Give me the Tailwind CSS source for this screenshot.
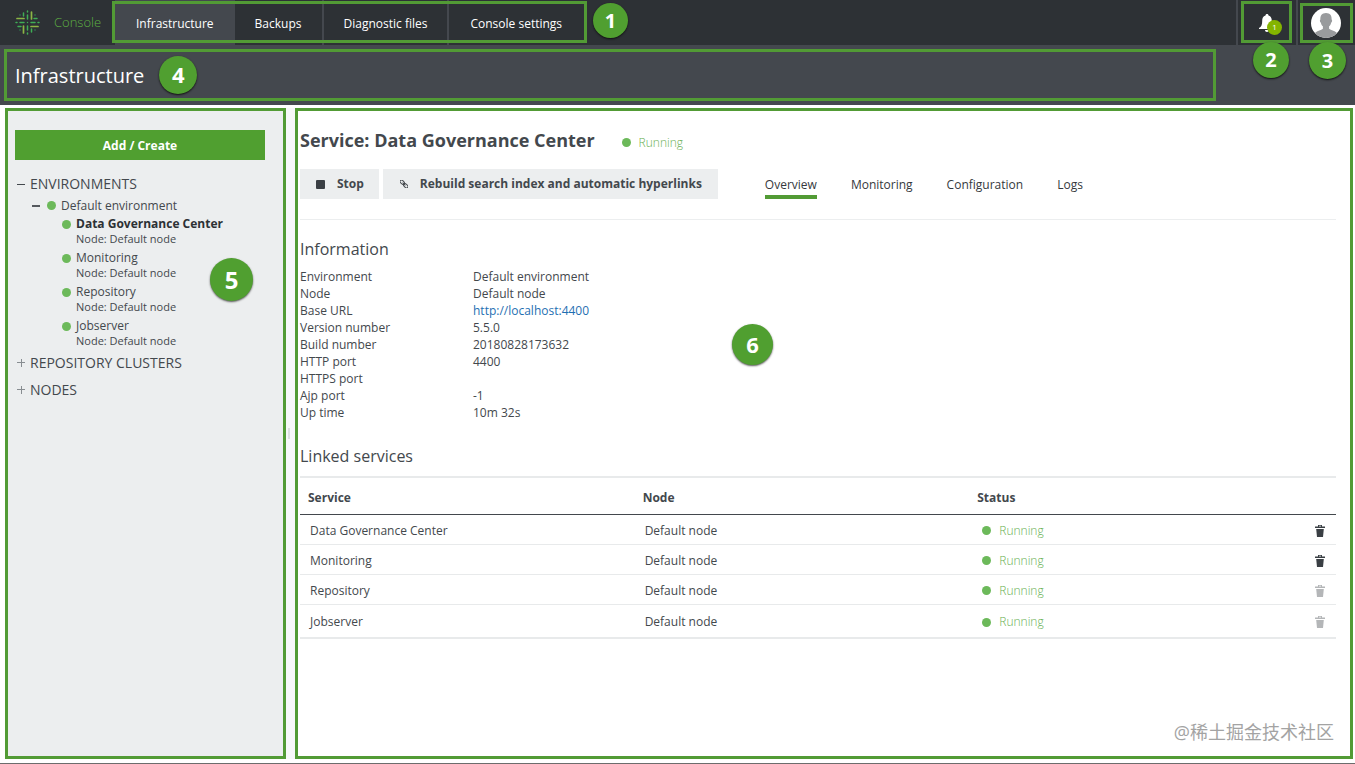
<!DOCTYPE html>
<html lang="en">
<head>
<meta charset="utf-8">
<meta name="viewport" content="width=device-width, initial-scale=1">
<title>Console - Infrastructure</title>
<script src="https://cdn.jsdelivr.net/npm/@tailwindcss/browser@4"></script>
</head>
<body class="flex min-h-screen flex-col bg-white font-['Open_Sans','Noto_Sans_CJK_SC',sans-serif] text-xs text-[#43484d]">
<svg class="hidden" aria-hidden="true">
  <symbol id="trash" viewBox="0 0 10 12"><path fill="currentColor" d="M3 0h4v1.500h3v1.500H0V1.500h3zM4 .8v.8h2V.8zM1.200 4h7.600L8 12H2z"/></symbol>
</svg>

<header class="relative flex h-[45px] bg-[#2d3135]">
  <a href="#" class="flex w-[115px] items-center gap-[14px] pl-[15px] text-[13px] font-light text-[#5eb043]">
    <svg class="size-[25px]" viewBox="0 0 25 25" fill="none" stroke-linecap="round" aria-hidden="true">
      <g stroke="#8bb545" stroke-width="1.700"><path d="M16.500 2v7M2 8.500h7M8.500 16v7M16 16.500h7"/></g>
      <g stroke="#3fae55" stroke-width="1.500"><path d="M12.500 1v1M12.500 5v4M8.500 3v3M12.500 16v4M12.500 23v1M16.500 19v3M1 12.500h1M5 12.500h4M3 16.500h3M16 12.500h4M23 12.500h1M19 8.500h3M12.500 12.500v.1"/></g>
      <g stroke="#2f8f58" stroke-width="1.500"><path d="M5 5v.1M20 5v.1M5 20v.1M20 20v.1"/></g>
    </svg>
    Console
  </a>
  <nav class="relative flex text-white">
    <a href="#" class="flex items-center bg-[#44484e] pt-[2px] pr-[21px] pl-[21px]">Infrastructure</a>
    <a href="#" class="flex items-center border-r-2 border-[#44484e] px-5 pt-[2px]">Backups</a>
    <a href="#" class="flex items-center border-r-2 border-[#44484e] px-5 pt-[2px]">Diagnostic files</a>
    <a href="#" class="flex items-center pt-[2px] pr-[25px] pl-[21px]">Console settings</a>
    <div class="pointer-events-none absolute top-[1px] right-0 -left-[3px] h-[42px] border-3 border-[#529b35]"></div>
  </nav>
  <span class="mt-[3px] ml-[6px] flex size-[35px] items-center justify-center rounded-full bg-[#509f30] text-xl font-bold text-white shadow-[0_1px_2px_#111]">1</span>
  <div class="relative ml-auto flex w-[60px] items-center justify-center border-l-2 border-[#44484e] pl-1">
    <button type="button" aria-label="Notifications" class="relative h-[24px] w-[24px]">
      <svg class="ml-[2px] h-[18px] w-[16px]" viewBox="0 0 16 18" fill="#fff" aria-hidden="true"><path d="M8 0c1 0 1.500.7 1.500 1.600C12 2.400 12.800 4.500 12.800 7c0 4 .8 5.800 3.200 7v1H0v-1c2.400-1.200 3.200-3 3.200-7 0-2.500.8-4.600 3.300-5.400C6.500.7 7 0 8 0zM6 16h4c0 1.200-.8 2-2 2s-2-.8-2-2z"/></svg>
      <span class="absolute top-[9px] left-[10px] flex size-[15px] items-center justify-center rounded-full bg-[#84b400] text-[8px] text-white">1</span>
    </button>
    <div class="pointer-events-none absolute top-[1px] right-[4px] left-[3px] h-[42px] border-3 border-[#529b35]"></div>
    <span class="absolute top-[42px] left-[15px] flex size-[36px] items-center justify-center rounded-full bg-[#509f30] text-xl font-bold text-white shadow-[0_1px_2px_#111]">2</span>
  </div>
  <div class="relative flex w-[59px] items-center justify-center border-l-2 border-[#44484e] pr-[2px]">
    <button type="button" aria-label="User profile">
      <svg class="size-[30px]" viewBox="0 0 30 30" aria-hidden="true"><clipPath id="face"><circle cx="15" cy="15" r="15"/></clipPath><g clip-path="url(#face)"><path fill="#fff" d="M0 0h30v30H0z"/><path fill="#999b9d" d="M15 5c4 0 6 2.800 5.600 6.500.8.200.7 2.800-.5 3.200-.4 1.800-1 2.800-2 3.600v2.500c1.500 1.500 7 2 8.400 5V30h-23v-4.200c1.500-3 7-3.500 8.400-5v-2.500c-1-.8-1.600-1.800-2-3.600-1.200-.4-1.300-3-.5-3.200C9 7.800 11 5 15 5z"/></g></svg>
    </button>
    <div class="pointer-events-none absolute top-[3px] right-[2px] left-[2px] h-[40px] border-3 border-[#529b35]"></div>
    <span class="absolute top-[42px] left-[11px] z-10 flex size-[37px] items-center justify-center rounded-full bg-[#509f30] text-xl font-bold text-white shadow-[0_1px_2px_#111]">3</span>
  </div>
</header>

<div class="bg-[#44484e] pt-[4px] pr-[139px] pb-[4px] pl-[4px]">
  <div class="flex h-[52px] items-center gap-[15px] border-3 border-[#529b35] pl-2">
    <h1 class="pt-[2px] text-xl text-white">Infrastructure</h1>
    <span class="flex size-[38px] items-center justify-center rounded-full bg-[#509f30] text-[22px] font-bold text-white shadow-[0_1px_2px_#111]">4</span>
  </div>
</div>

<div class="flex flex-1 bg-white pt-[3px] pr-[2px] pb-[4px]">
  <aside class="relative ml-[5px] w-[281px] shrink-0 border-3 border-[#529b35] bg-[#eceeef] pt-[19px] pr-[18px] pl-[7px]">
    <button type="button" class="h-[30px] w-full bg-[#509f30] pt-[2px] font-bold text-white">Add / Create</button>
    <ul class="mt-[13px]">
      <li>
        <div class="flex h-[22px] items-center text-sm"><span class="mr-[5px] ml-[2px] h-[1px] w-[8px] bg-[#43484d]"></span>ENVIRONMENTS</div>
        <ul>
          <li>
            <div class="flex h-[21px] items-center"><span class="ml-[17px] h-[2px] w-[8px] bg-[#55595e]"></span><span class="mr-[5px] ml-[7px] size-[9px] rounded-full bg-[#6cb95a]"></span>Default environment</div>
            <ul class="pl-[47px]">
              <li class="h-[34px]"><a href="#" class="flex items-center gap-[5px] leading-[16px] font-bold text-[#2d3135]"><span class="size-[9px] rounded-full bg-[#6cb95a]"></span>Data Governance Center</a><div class="pl-[14px] text-[11px] leading-[14px]">Node: Default node</div></li>
              <li class="h-[34px]"><a href="#" class="flex items-center gap-[5px] leading-[16px]"><span class="size-[9px] rounded-full bg-[#6cb95a]"></span>Monitoring</a><div class="pl-[14px] text-[11px] leading-[14px]">Node: Default node</div></li>
              <li class="h-[34px]"><a href="#" class="flex items-center gap-[5px] leading-[16px]"><span class="size-[9px] rounded-full bg-[#6cb95a]"></span>Repository</a><div class="pl-[14px] text-[11px] leading-[14px]">Node: Default node</div></li>
              <li class="h-[34px]"><a href="#" class="flex items-center gap-[5px] leading-[16px]"><span class="size-[9px] rounded-full bg-[#6cb95a]"></span>Jobserver</a><div class="pl-[14px] text-[11px] leading-[14px]">Node: Default node</div></li>
            </ul>
          </li>
        </ul>
      </li>
      <li class="flex h-[22px] items-center text-sm"><svg class="mr-[5px] ml-[2px] size-[8px]" viewBox="0 0 8 8" stroke="#888d91" aria-hidden="true"><path d="M0 3.500h8M4.500 0v8"/></svg>REPOSITORY CLUSTERS</li>
      <li class="mt-[5px] flex h-[22px] items-center text-sm"><svg class="mr-[5px] ml-[2px] size-[8px]" viewBox="0 0 8 8" stroke="#888d91" aria-hidden="true"><path d="M0 3.500h8M4.500 0v8"/></svg>NODES</li>
    </ul>
    <span class="absolute top-[147px] right-[30px] flex size-[43px] items-center justify-center rounded-full bg-[#509f30] text-2xl font-bold text-white shadow-[0_1px_2px_#555]">5</span>
  </aside>
  <div class="flex w-[9px] shrink-0 items-center bg-[#f7f8f9]"><span class="h-[11px] w-[4px] border-r-2 border-[#dcdfe1]"></span></div>

  <main class="relative flex-1 border-3 border-[#529b35] pt-[17px] pr-[14px] pl-[2px]">
    <div class="flex h-[24px] items-center">
      <h2 class="text-lg font-bold">Service: Data Governance Center</h2>
      <span class="mt-[5px] ml-[27px] size-[9px] rounded-full bg-[#6cb95a]"></span>
      <span class="mt-[5px] ml-2 font-light text-[#69b052]">Running</span>
    </div>
    <div class="mt-[17px] flex border-b border-[#eceeef] pb-5">
      <button type="button" class="mr-1 flex h-[30px] items-center gap-[12px] bg-[#eceeef] pr-[15px] pl-[16px] font-bold"><span class="size-[9px] rounded-[1px] bg-[#3a3f44]"></span>Stop</button>
      <button type="button" class="flex h-[30px] items-center gap-[12px] bg-[#eceeef] pr-[16px] pl-[17px] font-bold"><svg class="size-[8px]" viewBox="0 0 8 8" fill="none" stroke="#43484d" aria-hidden="true"><g transform="rotate(45 4 4)"><rect x="-1" y="2.500" width="5" height="3" rx="1.500"/><rect x="4" y="2.500" width="5" height="3" rx="1.500"/><path d="M2 4h4"/></g></svg>Rebuild search index and automatic hyperlinks</button>
      <nav class="ml-[47px] flex gap-[34px] text-[#35393d]">
        <a href="#" class="border-b-4 border-[#529b35] pt-[5px] leading-[21px]">Overview</a>
        <a href="#" class="pt-[5px] leading-[21px]">Monitoring</a>
        <a href="#" class="pt-[5px] leading-[21px]">Configuration</a>
        <a href="#" class="pt-[5px] leading-[21px]">Logs</a>
      </nav>
    </div>

    <h3 class="mt-[17px] text-base leading-6">Information</h3>
    <dl class="mt-[7px] grid auto-rows-[17px] grid-cols-[173px_1fr] leading-[17px]">
      <dt>Environment</dt><dd>Default environment</dd>
      <dt>Node</dt><dd>Default node</dd>
      <dt>Base URL</dt><dd><a href="#" class="text-[#1f6fb2]">http://localhost:4400</a></dd>
      <dt>Version number</dt><dd>5.5.0</dd>
      <dt>Build number</dt><dd>20180828173632</dd>
      <dt>HTTP port</dt><dd>4400</dd>
      <dt>HTTPS port</dt><dd></dd>
      <dt>Ajp port</dt><dd>-1</dd>
      <dt>Up time</dt><dd>10m 32s</dd>
    </dl>

    <h3 class="mt-[23px] text-base leading-6">Linked services</h3>
    <table class="mt-2 w-full table-fixed border-separate border-spacing-0 border-y-2 border-[#e8eaeb] text-left">
      <thead>
        <tr class="h-[37px] [&>*]:border-b [&>*]:border-[#43484d] [&>*]:px-2 [&>*]:pt-1">
          <th class="w-[32.3%]">Service</th><th class="w-[32.3%]">Node</th><th>Status</th><td></td>
        </tr>
      </thead>
      <tbody class="[&>tr>td]:px-[10px] [&>tr>td]:pt-[2px]">
        <tr class="h-[30px] [&>td]:border-b [&>td]:border-[#e8eaeb]">
          <td>Data Governance Center</td><td>Default node</td>
          <td><span class="ml-[3px] flex items-center gap-2 font-light text-[#69b052]"><span class="size-[9px] rounded-full bg-[#6cb95a]"></span>Running</span></td>
          <td><button type="button" aria-label="Remove Data Governance Center" class="mr-[1px] ml-auto block text-[#3a3f44]"><svg class="h-[12px] w-[10px]"><use href="#trash"/></svg></button></td>
        </tr>
        <tr class="h-[30px] [&>td]:border-b [&>td]:border-[#e8eaeb]">
          <td>Monitoring</td><td>Default node</td>
          <td><span class="ml-[3px] flex items-center gap-2 font-light text-[#69b052]"><span class="size-[9px] rounded-full bg-[#6cb95a]"></span>Running</span></td>
          <td><button type="button" aria-label="Remove Monitoring" class="mr-[1px] ml-auto block text-[#3a3f44]"><svg class="h-[12px] w-[10px]"><use href="#trash"/></svg></button></td>
        </tr>
        <tr class="h-[30px] [&>td]:border-b [&>td]:border-[#e8eaeb]">
          <td>Repository</td><td>Default node</td>
          <td><span class="ml-[3px] flex items-center gap-2 font-light text-[#69b052]"><span class="size-[9px] rounded-full bg-[#6cb95a]"></span>Running</span></td>
          <td><button type="button" disabled aria-label="Remove Repository" class="mr-[1px] ml-auto block text-[#b4b6b8]"><svg class="h-[12px] w-[10px]"><use href="#trash"/></svg></button></td>
        </tr>
        <tr class="h-[32px]">
          <td>Jobserver</td><td>Default node</td>
          <td><span class="ml-[3px] flex items-center gap-2 font-light text-[#69b052]"><span class="size-[9px] rounded-full bg-[#6cb95a]"></span>Running</span></td>
          <td><button type="button" disabled aria-label="Remove Jobserver" class="mr-[1px] ml-auto block text-[#b4b6b8]"><svg class="h-[12px] w-[10px]"><use href="#trash"/></svg></button></td>
        </tr>
      </tbody>
    </table>
    <span class="absolute top-[213px] left-[434px] flex size-[41px] items-center justify-center rounded-full bg-[#509f30] text-[22px] font-bold text-white shadow-[0_1px_2px_#555]">6</span>
    <p class="absolute right-[16px] bottom-[10px] text-lg text-[#a3a3a3]">@稀土掘金技术社区</p>
  </main>
</div>
<footer class="h-[1px] bg-[#6c6c6c]"></footer>
</body>
</html>
